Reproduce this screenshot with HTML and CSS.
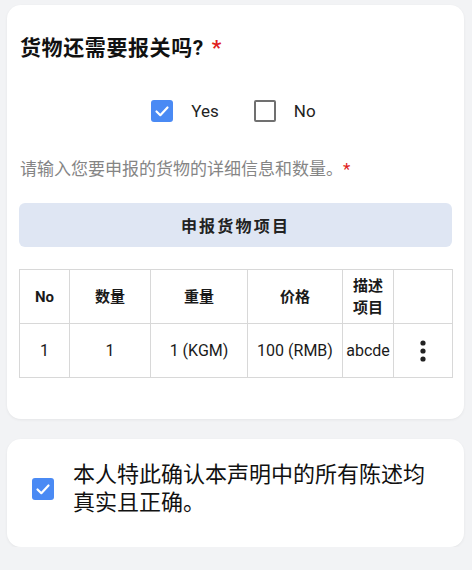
FILE: index.html
```html
<!DOCTYPE html>
<html lang="zh">
<head>
<meta charset="utf-8">
<link rel="stylesheet" href="styles.css">
</head>
<body>
<div class="page">
  <section class="card card-main">
    <h2 class="title">货物还需要报关吗?<span class="req">*</span></h2>
    <div class="choices">
      <label class="choice">
        <span class="box box-checked">
          <svg viewBox="0 0 22 22" width="22" height="22"><path d="M5.5 11.5 L9.3 15.2 L16.5 7.5" fill="none" stroke="#fff" stroke-width="2.2" stroke-linecap="round" stroke-linejoin="round"/></svg>
        </span>
        <span class="choice-text">Yes</span>
      </label>
      <label class="choice">
        <span class="box box-empty"></span>
        <span class="choice-text">No</span>
      </label>
    </div>
    <p class="hint">请输入您要申报的货物的详细信息和数量。<span class="req">*</span></p>
    <button class="declare-btn">申报货物项目</button>
    <table class="items">
      <colgroup>
        <col class="c1"><col class="c2"><col class="c3"><col class="c4"><col class="c5"><col class="c6">
      </colgroup>
      <thead>
        <tr><th>No</th><th>数量</th><th>重量</th><th>价格</th><th>描述<br>项目</th><th></th></tr>
      </thead>
      <tbody>
        <tr>
          <td>1</td><td>1</td><td>1 (KGM)</td><td>100 (RMB)</td><td>abcde</td>
          <td><svg class="more" viewBox="0 0 6 22" width="6" height="22"><circle cx="3" cy="3" r="2.6" fill="#222"/><circle cx="3" cy="11" r="2.6" fill="#222"/><circle cx="3" cy="19" r="2.6" fill="#222"/></svg></td>
        </tr>
      </tbody>
    </table>
  </section>
  <section class="card card-confirm">
    <span class="box box-checked">
      <svg viewBox="0 0 22 22" width="22" height="22"><path d="M5.5 11.5 L9.3 15.2 L16.5 7.5" fill="none" stroke="#fff" stroke-width="2.2" stroke-linecap="round" stroke-linejoin="round"/></svg>
    </span>
    <p class="confirm-text">本人特此确认本声明中的所有陈述均真实且正确。</p>
  </section>
</div>
</body>
</html>
```
FILE: styles.css
```css
* { box-sizing: border-box; }
html, body {
  margin: 0;
  padding: 0;
  background: #f2f3f5;
  font-family: Roboto, "Noto Sans CJK SC", sans-serif;
  color: #1a1a1a;
}
.page {
  padding: 5px 8px 0 7px;
  display: flex;
  flex-direction: column;
  gap: 20px;
}
.card {
  background: #fff;
  border-radius: 14px;
  box-shadow: 0 1px 3px rgba(0,0,0,0.06);
}
.card-main {
  padding: 30px 12px 41px 12px;
}
.title {
  margin: 0 0 0 1px;
  font-size: 21px;
  line-height: 26px;
  font-weight: 700;
  letter-spacing: 0.6px;
  color: #111;
}
.req {
  color: #e02020;
  margin-left: 8px;
  font-weight: 700;
}
.choices {
  margin-top: 39px;
  display: flex;
  justify-content: center;
  align-items: center;
  gap: 35px;
  padding-right: 4px;
}
.choice {
  display: flex;
  align-items: center;
  gap: 18px;
}
.box {
  width: 22px;
  height: 22px;
  border-radius: 3px;
  display: inline-flex;
  flex: none;
}
.box-checked {
  background: #4a8af4;
}
.box-empty {
  border: 2px solid #707070;
  border-radius: 2px;
}
.choice-text {
  font-size: 17px;
  line-height: 22px;
  color: #222;
}
.hint {
  margin: 35px 0 0 1px;
  font-size: 17px;
  line-height: 24px;
  color: #858585;
}
.hint .req { margin-left: 0; font-weight: 400; }
.declare-btn {
  display: block;
  width: 100%;
  margin-top: 22px;
  height: 44px;
  border: none;
  border-radius: 6px;
  background: #dfe6f3;
  font-family: Roboto, "Noto Sans CJK SC", sans-serif;
  font-size: 16px;
  font-weight: 700;
  letter-spacing: 2.2px;
  color: #222;
}
.items {
  margin-top: 22px;
  width: 100%;
  border-collapse: collapse;
  table-layout: fixed;
}
.c1 { width: 50px; }
.c2 { width: 81px; }
.c3 { width: 97px; }
.c4 { width: 95px; }
.c5 { width: 51px; }
.c6 { width: 59px; }
.items th, .items td {
  border: 1px solid #d8d8d8;
  text-align: center;
  padding: 0;
  color: #1a1a1a;
}
.items th {
  height: 54px;
  font-size: 15px;
  line-height: 22px;
  font-weight: 700;
}
.items td {
  height: 54px;
  font-size: 16px;
}
.more {
  display: block;
  margin: 0 auto;
}
.card-confirm {
  padding: 22px 25px 30px 25px;
  display: flex;
  align-items: center;
  gap: 19px;
}
.confirm-text {
  margin: 0;
  font-size: 22px;
  line-height: 28px;
  color: #111;
  max-width: 360px;
}
```
